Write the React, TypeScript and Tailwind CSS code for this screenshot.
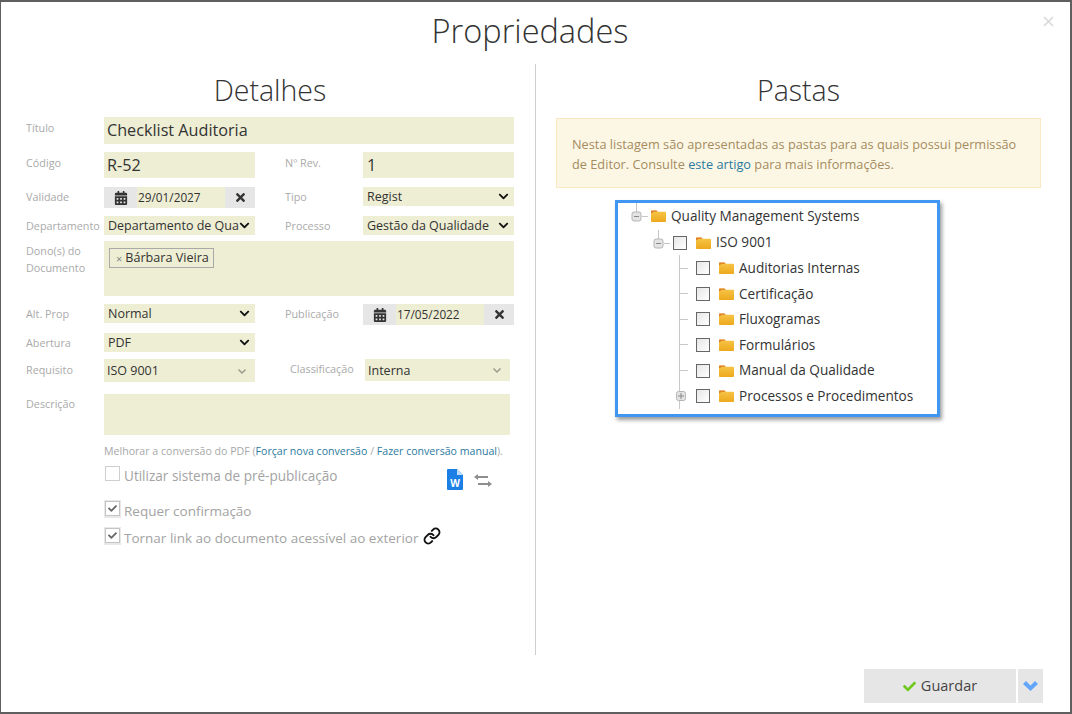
import React from "react";
import { FaCalendarAlt, FaCheck, FaChevronDown, FaTimes } from "react-icons/fa";
import { Link as LinkIcon } from "lucide-react";

const Label = ({ children, className = "" }: { children: React.ReactNode; className?: string }) => (
  <div className={`text-[10.8px] leading-[16px] text-[#aaaaaa] ${className}`}>{children}</div>
);

const Input = ({ children, className = "" }: { children?: React.ReactNode; className?: string }) => (
  <div className={`bg-[#eeeed4] flex items-center text-[#333] ${className}`}>{children}</div>
);

const Select = ({ value, className = "", size = "text-[12.5px]", muted = false }: { value: string; className?: string; size?: string; muted?: boolean }) => (
  <Input className={`justify-between pl-1 pr-[5px] whitespace-nowrap overflow-hidden ${size} ${className}`}>
    <span className="overflow-hidden pt-[1px]">{value}</span>
    {muted ? (
      <svg width="10" height="7" viewBox="0 0 10 7" className="shrink-0 mr-[3px]"><path d="M1.5 1.5 5 5l3.5-3.5" fill="none" stroke="#9a9a8a" strokeWidth="1.5" /></svg>
    ) : (
      <FaChevronDown className="shrink-0 text-[11px] text-[#111]" />
    )}
  </Input>
);

const DateField = ({ value, className = "" }: { value: string; className?: string }) => (
  <div className={`flex w-[151px] h-[21px] items-stretch ${className}`}>
    <div className="w-[33px] bg-[#e6e6e6] flex items-center justify-center">
      <FaCalendarAlt className="text-[14px] text-[#333]" />
    </div>
    <div className="flex-1 bg-[#eeeed4] text-[11.8px] text-[#333] flex items-center pl-[1px] pt-[1px] whitespace-nowrap">{value}</div>
    <div className="w-[30px] bg-[#e6e6e6] flex items-center justify-center">
      <FaTimes className="text-[13px] text-[#333]" />
    </div>
  </div>
);

const Check = ({ checked = false }: { checked?: boolean }) =>
  checked ? (
    <span className="w-[17px] h-[18px] bg-[#e8e8e8] p-[1px] flex shrink-0">
      <span className="w-[15px] h-[15px] bg-white border border-[#c4c4c4] flex items-center justify-center">
        <FaCheck className="text-[9px] text-[#666]" />
      </span>
    </span>
  ) : (
    <span className="w-[15px] h-[15px] bg-white border border-[#cfcfcf] shrink-0" />
  );

const Folder = () => (
  <svg width="15" height="12" viewBox="0 0 15 12" className="shrink-0">
    <defs>
      <linearGradient id="fold" x1="0" y1="0" x2="0" y2="1">
        <stop offset="0" stopColor="#f7c64a" />
        <stop offset="1" stopColor="#eda91e" />
      </linearGradient>
    </defs>
    <path d="M0 1.5C0 .9.4.5 1 .5h4.5l1.2 1.2H14c.6 0 1 .4 1 1V11c0 .6-.4 1-1 1H1c-.6 0-1-.4-1-1z" fill="url(#fold)" />
    <path d="M0 3.4V1.5C0 .9.4.5 1 .5h4.5L6.7 1.8H3z" fill="#dd7f2b" />
  </svg>
);

const TreeBox = () => (
  <span className="w-[14px] h-[14px] border border-[#666] bg-[linear-gradient(135deg,#e6e6e6,#ffffff)] shrink-0" />
);

const Expander = ({ plus = false, line = true }: { plus?: boolean; line?: boolean }) => (
  <svg width="18" height="26" viewBox="0 0 18 26" className="shrink-0">
    {line && <path d="M5.5 0v9" stroke="#c6c6c6" strokeWidth="1" />}
    <path d="M11 13.5h6" stroke="#c6c6c6" strokeWidth="1" />
    <rect x="1" y="9" width="9" height="9" rx="2" fill="#e4e4e4" stroke="#b5b5b5" />
    <path d="M3 13.5h5" stroke="#888" strokeWidth="1" />
    {plus && <path d="M5.5 11v5" stroke="#888" strokeWidth="1" />}
  </svg>
);

const Leaf = ({ name, last = false }: { name: string; last?: boolean }) => (
  <div className="h-[25.6px] flex items-center text-[13.6px] text-[#333] whitespace-nowrap relative">
    <div className="w-[17px] shrink-0 flex items-center h-full border-l border-[#c9c9c9]">
      {last ? null : <span className="w-[8px] h-px bg-[#c9c9c9]" />}
    </div>
    <TreeBox />
    <span className="w-[9px] shrink-0" />
    <Folder />
    <span className="ml-[5px]">{name}</span>
    {last && (
      <span className="absolute left-[-3px] top-[8px]">
        <svg width="10" height="10" viewBox="0 0 10 10" className="block">
          <rect x=".5" y=".5" width="9" height="9" rx="2" fill="#e4e4e4" stroke="#b5b5b5" />
          <path d="M2 5h6M5 2v6" stroke="#888" />
        </svg>
      </span>
    )}
  </div>
);

export default function App() {
  return (
    <div className="w-[1072px] h-[714px] bg-white border-t-2 border-b-2 border-l border-r-2 border-[#5f5f5f] font-['Open_Sans',sans-serif] flex flex-col overflow-hidden relative text-[#333]">
      <span className="absolute right-[16px] top-[14px] text-[#d9d9d9]">
        <svg width="11" height="11" viewBox="0 0 11 11" className="block"><path d="M1 1l9 9M10 1l-9 9" stroke="currentColor" strokeWidth="1.6" /></svg>
      </span>
      <h1 className="text-center text-[32.5px] leading-[44px] font-light h-[62px] pt-[7px] mr-[11px] text-[#333] box-content -mb-[7px]">Propriedades</h1>

      <div className="flex flex-1">
        <div className="w-[534px] h-[591px] border-r border-[#cfcfcf] shrink-0 box-content">
          <h2 className="text-[28.5px] leading-[38px] font-light text-center h-[52px] pt-[7px] pl-[4px] text-[#333] box-border">Detalhes</h2>
          <div className="pl-[25px] flex flex-col">
            <div className="flex mt-[1px]">
              <Label className="w-[78px] pt-[3px]">Título</Label>
              <Input className="w-[410px] h-[27px] px-[3px] text-[16.2px]">Checklist Auditoria</Input>
            </div>
            <div className="flex mt-[8px]">
              <Label className="w-[78px] pt-[3px]">Código</Label>
              <Input className="w-[151px] h-[26px] px-[3px] text-[16.2px]">R-52</Input>
              <Label className="w-[108px] pl-[30px] pt-[3px]">Nº Rev.</Label>
              <Input className="w-[151px] h-[26px] px-[4px] text-[16.2px]">1</Input>
            </div>
            <div className="flex mt-[9px]">
              <Label className="w-[78px] pt-[2px]">Validade</Label>
              <DateField value="29/01/2027" />
              <Label className="w-[108px] pl-[30px] pt-[2px]">Tipo</Label>
              <Select value="Regist" className="w-[151px] h-[19px]" />
            </div>
            <div className="flex mt-[8px]">
              <Label className="w-[78px] pt-[2px] whitespace-nowrap">Departamento</Label>
              <Select value="Departamento de Qua" className="w-[151px] h-[19px]" />
              <Label className="w-[108px] pl-[30px] pt-[2px]">Processo</Label>
              <Select value="Gestão da Qualidade" className="w-[151px] h-[19px]" />
            </div>
            <div className="flex mt-[6px]">
              <Label className="w-[78px] leading-[17px] pt-[1px]">Dono(s) do Documento</Label>
              <Input className="w-[410px] h-[55px] items-start pl-[5px] pt-[7px]">
                <span className="h-[20px] border border-[#a9a9a9] bg-[#eeeed4] flex items-center pl-[6px] pr-[4px] text-[12.6px] leading-none whitespace-nowrap">
                  <span className="text-[#888] text-[11px] mr-[3px]">×</span>Bárbara Vieira
                </span>
              </Input>
            </div>
            <div className="flex mt-[8px]">
              <Label className="w-[78px] pt-[2px]">Alt. Prop</Label>
              <Select value="Normal" className="w-[151px] h-[19px]" />
              <Label className="w-[108px] pl-[30px] pt-[2px]">Publicação</Label>
              <DateField value="17/05/2022" />
            </div>
            <div className="flex mt-[8px]">
              <Label className="w-[78px] pt-[2px]">Abertura</Label>
              <Select value="PDF" className="w-[151px] h-[19px]" />
            </div>
            <div className="flex mt-[7px]">
              <Label className="w-[78px] pt-[3px]">Requisito</Label>
              <Select value="ISO 9001" muted className="w-[151px] h-[23px] !pl-[3px] pt-[1px]" />
              <Label className="w-[110px] pl-[35px] pt-[2px] whitespace-nowrap">Classificação</Label>
              <Select value="Interna" muted className="w-[145px] h-[22px] !pl-[3px] pt-[1px]" />
            </div>
            <div className="flex mt-[12px]">
              <Label className="w-[78px] pt-[2px]">Descrição</Label>
              <Input className="w-[406px] h-[41px]" />
            </div>
            <div className="pl-[78px]">
              <div className="text-[10.6px] leading-[14px] text-[#a8a8a8] mt-[9px] whitespace-nowrap">
                Melhorar a conversão do PDF (<span className="text-[#2b7a9e]">Forçar nova conversão</span> / <span className="text-[#2b7a9e]">Fazer conversão manual</span>).
              </div>
              <div className="flex items-start mt-[8px] ml-[1px]">
                <Check />
                <span className="ml-[4px] text-[13.55px] leading-[20px] text-[#a3a3a3] w-[323px]">Utilizar sistema de pré-publicação</span>
                <svg width="16" height="21" viewBox="0 0 16 21" className="shrink-0 mt-[3px]">
                  <path d="M0 1a1 1 0 0 1 1-1h9l6 6v14a1 1 0 0 1-1 1H1a1 1 0 0 1-1-1z" fill="#1b7fe6" />
                  <path d="M10 0l6 6h-6z" fill="#bcdcfb" />
                  <text x="8" y="18" textAnchor="middle" fontSize="10" fontWeight="700" fill="#fff" fontFamily="Open Sans, sans-serif">W</text>
                </svg>
                <svg width="18" height="13" viewBox="0 0 18 13" className="ml-[11px] mt-[8px] shrink-0" fill="#8e8e8e">
                  <path d="M0 3l4-3v2h10v2H4v2zM18 10l-4-3v2H4v2h10v2z" />
                </svg>
              </div>
              <div className="flex items-start mt-[10px]">
                <Check checked />
                <span className="ml-[3px] text-[13.5px] leading-[20px] text-[#a3a3a3] mt-[1px]">Requer confirmação</span>
              </div>
              <div className="flex items-start mt-[6px]">
                <Check checked />
                <span className="ml-[3px] text-[13.5px] leading-[20px] text-[#a3a3a3] mt-[1px] whitespace-nowrap">Tornar link ao documento acessível ao exterior</span>
                <LinkIcon size={18} strokeWidth={2.6} className="ml-[5px] text-[#111] shrink-0" />
              </div>
            </div>
          </div>
        </div>

        <div className="flex-1 pl-[20px]">
          <h2 className="text-[28.5px] leading-[38px] font-light text-center w-[485px] h-[52px] pt-[7px] text-[#333] box-border">Pastas</h2>
          <div className="w-[485px] h-[70px] bg-[#fcf7e5] border border-[#fae8c5] px-[15px] pt-[15px] text-[12.75px] leading-[20px] text-[#a58b5e] mt-[2px]">
            Nesta listagem são apresentadas as pastas para as quais possui permissão de Editor. Consulte <span className="text-[#2b7a9e]">este artigo</span> para mais informações.
          </div>
          <div className="ml-[59px] mt-[12px] w-[325px] h-[217px] border-[3px] border-[#3f97f2] shadow-[2px_3px_4px_rgba(0,0,0,0.4)] pl-[13px]">
            <div className="h-[25.7px] flex items-center text-[13.6px] whitespace-nowrap">
              <Expander />
              <span className="w-[2px] shrink-0" />
              <Folder />
              <span className="ml-[5px]">Quality Management Systems</span>
            </div>
            <div className="pl-[22px] pt-[1px]">
              <div className="h-[25.7px] flex items-center text-[13.6px] whitespace-nowrap">
                <Expander />
                <span className="w-[2px] shrink-0" />
                <TreeBox />
                <span className="w-[9px] shrink-0" />
                <Folder />
                <span className="ml-[5px]">ISO 9001</span>
              </div>
              <div className="pl-[26px]">
                <Leaf name="Auditorias Internas" />
                <Leaf name="Certificação" />
                <Leaf name="Fluxogramas" />
                <Leaf name="Formulários" />
                <Leaf name="Manual da Qualidade" />
                <Leaf name="Processos e Procedimentos" last />
              </div>
            </div>
          </div>
        </div>
      </div>

      <div className="absolute right-[27px] bottom-[9px] flex gap-[2px]">
        <div className="w-[152px] h-[34px] bg-[#e6e6e6] flex items-center justify-center text-[14.5px] text-[#444]">
          <FaCheck className="text-[#6fc91f] text-[13px] mr-[5px]" />Guardar
        </div>
        <div className="w-[25px] h-[34px] bg-[#e6e6e6] flex items-center justify-center">
          <svg width="15" height="10" viewBox="0 0 15 10" className="block"><path d="M0 3l3-3 4.5 4.5L12 0l3 3-7.5 7z" fill="#62a6fb" /></svg>
        </div>
      </div>
    </div>
  );
}
